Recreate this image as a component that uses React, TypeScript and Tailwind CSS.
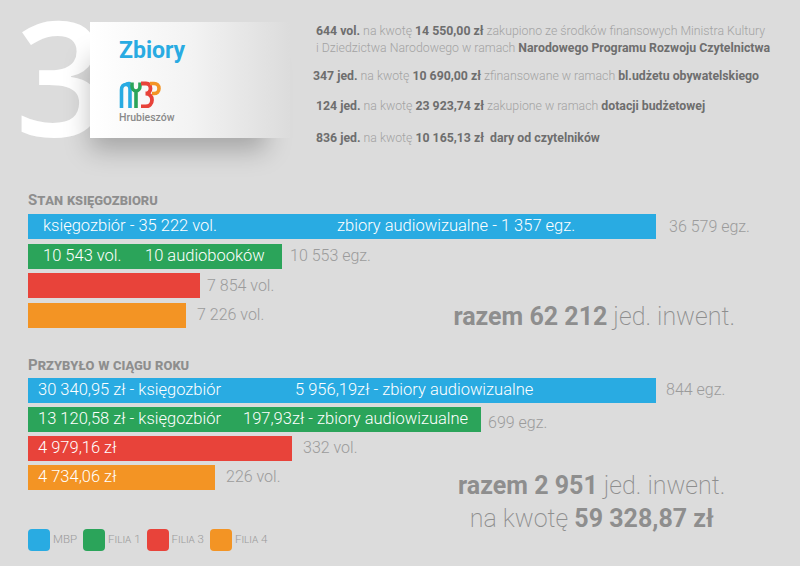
import React from 'react';

// Kolory oddziałów
const BLUE = 'bg-[#29abe2]';
const GREEN = 'bg-[#2ba45a]';
const RED = 'bg-[#e8433a]';
const ORANGE = 'bg-[#f39424]';

const Logo: React.FC = () => (
  <div className="flex flex-col items-start">
    <svg width="42" height="27" viewBox="0 0 42 27" fill="none">
      {/* niebieskie "m" */}
      <path d="M2.5 27V9C2.5 5 4.5 3.5 7 3.5C9.5 3.5 11 5 11 8V27" stroke="#29abe2" strokeWidth="3.6" />
      <path d="M6 4C7.5 2.5 9.5 2 11.5 2.5" stroke="#29abe2" strokeWidth="3" />
      {/* zielony element */}
      <path d="M17 27V10M13 1.5V5C13 8 15 10 17 10C19 10 21 8 21 5V1.5" stroke="#2ba45a" strokeWidth="3.6" />
      {/* czerwone "B" */}
      <path d="M22 2.5H27C30 2.5 31.5 4.5 31.5 7.5C31.5 10.5 29.5 12.5 26.5 12.5C30.5 12.5 33 15 33 19C33 23 30.5 25.5 26.5 25.5H22" stroke="#e8433a" strokeWidth="3.8" />
      {/* pomarańczowe "P" */}
      <path d="M31 2.5H35C38 2.5 40 4.5 40 7.5C40 10.5 38 12.5 35 12.5H33" stroke="#f39424" strokeWidth="3.6" />
    </svg>
    <span className="mt-[5px] text-[10.5px] leading-none text-[#8a8a8a] font-medium">Hrubieszów</span>
  </div>
);

interface BarProps {
  width: number;
  color: string;
  children?: React.ReactNode;
  note?: string;
  noteClass?: string;
}

const Bar: React.FC<BarProps> = ({ width, color, children, note, noteClass }) => (
  <div className="flex items-center h-[25px]">
    <div
      className={`${color} h-[25px] shrink-0 flex items-center text-white text-[16.5px] font-light leading-none whitespace-nowrap`}
      style={{ width }}
    >
      {children}
    </div>
    {note && (
      <span className={`ml-[11px] text-[16px] font-light text-[#9b9b9b] whitespace-nowrap leading-none ${noteClass ?? ''}`}>
        {note}
      </span>
    )}
  </div>
);

const SectionTitle: React.FC<{ children: React.ReactNode }> = ({ children }) => (
  <h2 className="pl-[28px] text-[15px] leading-none font-bold text-[#8e8e8e] [font-variant:small-caps]">
    {children}
  </h2>
);

const LegendItem: React.FC<{ color: string; label: string; caps?: boolean }> = ({ color, label, caps }) => (
  <div className="flex items-center gap-[3px]">
    <div className={`${color} w-[22px] h-[22px] rounded-[4px]`} />
    <span className={`text-[11.5px] text-[#9b9b9b] font-light ${caps ? '[font-variant:small-caps]' : ''}`}>{label}</span>
  </div>
);

export default function App() {
  return (
    <div
      className="w-[800px] h-[566px] bg-[#dcdcdc] overflow-hidden"
      style={{ fontFamily: 'Roboto, "Noto Sans", sans-serif' }}
    >
      {/* Nagłówek */}
      <div className="flex h-[186px]">
        <div className="w-[300px] shrink-0 flex items-start pl-[15px]">
          <div className="w-[75px] shrink-0 overflow-visible">
            <span
              className="block h-[120px] mt-[14px] text-[160px] leading-[120px] font-semibold text-white"
              style={{ fontFamily: '"Open Sans", sans-serif' }}
            >
              3
            </span>
          </div>
          <div className="relative mt-[22px] w-[200px] h-[116px] bg-linear-to-r from-white via-[#f3f3f3] to-[#dcdcdc] shadow-[-12px_24px_24px_-12px_rgba(0,0,0,0.25)] pl-[29px] pt-[17px]">
            <div className="text-[23px] font-bold text-[#29abe2] leading-none">Zbiory</div>
            <div className="mt-[19px]">
              <Logo />
            </div>
          </div>
        </div>
        <div className="pt-[23px] pl-[16px] text-[12.3px] leading-[17px] text-[#a3a3a3] font-light whitespace-nowrap">
          <p>
            <b className="font-bold text-[#6e6e6e]">644 vol.</b> na kwotę <b className="font-bold text-[#6e6e6e]">14 550,00 zł</b> zakupiono ze środków finansowych Ministra Kultury
          </p>
          <p>
            i Dziedzictwa Narodowego w ramach <b className="font-bold text-[#6e6e6e]">Narodowego Programu Rozwoju Czytelnictwa</b>
          </p>
          <p className="mt-[11px] -ml-[3px]">
            <b className="font-bold text-[#6e6e6e]">347 jed.</b> na kwotę <b className="font-bold text-[#6e6e6e]">10 690,00 zł</b> zfinansowane w ramach <b className="font-bold text-[#6e6e6e]">bl.udżetu obywatelskiego</b>
          </p>
          <p className="mt-[13px]">
            <b className="font-bold text-[#6e6e6e]">124 jed.</b> na kwotę <b className="font-bold text-[#6e6e6e]">23 923,74 zł</b> zakupione w ramach <b className="font-bold text-[#6e6e6e]">dotacji budżetowej</b>
          </p>
          <p className="mt-[15px]">
            <b className="font-bold text-[#6e6e6e]">836 jed.</b> na kwotę <b className="font-bold text-[#6e6e6e]">10 165,13 zł</b>&nbsp; <b className="font-bold text-[#6e6e6e]">dary od czytelników</b>
          </p>
        </div>
      </div>

      {/* Stan księgozbioru */}
      <div className="mt-[7px]">
        <SectionTitle>Stan księgozbioru</SectionTitle>
      </div>
      <div className="pl-[28px] mt-[6px] flex flex-col gap-[4.5px]">
        <Bar width={628} color={BLUE} note="36 579 egz." noteClass="!ml-[13px]">
          <span className="pl-[15px] w-[309px]">księgozbiór - 35 222 vol.</span>
          <span>zbiory audiowizualne - 1 357 egz.</span>
        </Bar>
        <Bar width={254} color={GREEN} note="10 553 egz." noteClass="!ml-[8px]">
          <span className="pl-[15px] w-[117px]">10 543 vol.</span>
          <span>10 audiobooków</span>
        </Bar>
        <div className="flex">
          <div className="flex flex-col gap-[4.5px]">
            <Bar width={172} color={RED} note="7 854 vol." noteClass="!ml-[7px]" />
            <Bar width={158} color={ORANGE} note="7 226 vol." />
          </div>
          <div className="flex-1 flex items-end justify-end pr-[65px] -mb-[1px]">
            <p className="text-[25px] leading-none text-[#8e8e8e] font-extralight whitespace-nowrap">
              <b className="font-bold">razem 62 212</b> jed. inwent.
            </p>
          </div>
        </div>
      </div>

      {/* Przybyło w ciągu roku */}
      <div className="mt-[30px]">
        <SectionTitle>Przybyło w ciągu roku</SectionTitle>
      </div>
      <div className="pl-[28px] mt-[5px] flex flex-col gap-[4px]">
        <Bar width={628} color={BLUE} note="844 egz." noteClass="!ml-[10px]">
          <span className="pl-[10px] w-[267px]">30 340,95 zł - księgozbiór</span>
          <span>5 956,19zł - zbiory audiowizualne</span>
        </Bar>
        <Bar width={453} color={GREEN} note="699 egz." noteClass="!ml-[7px] mt-[7px]">
          <span className="pl-[10px] w-[215px]">13 120,58 zł - księgozbiór</span>
          <span>197,93zł - zbiory audiowizualne</span>
        </Bar>
        <div className="flex">
          <div className="flex flex-col gap-[4px]">
            <Bar width={264} color={RED} note="332 vol.">
              <span className="pl-[10px]">4 979,16 zł</span>
            </Bar>
            <Bar width={187} color={ORANGE} note="226 vol.">
              <span className="pl-[10px]">4 734,06 zł</span>
            </Bar>
            <div className="mt-[35px] flex items-center gap-[6px]">
              <LegendItem color={BLUE} label="MBP" />
              <LegendItem color={GREEN} label="Filia 1" caps />
              <LegendItem color={RED} label="Filia 3" caps />
              <LegendItem color={ORANGE} label="Filia 4" caps />
            </div>
          </div>
          <div className="flex-1 pt-[33px] pl-[26px] text-center text-[25px] leading-[33px] text-[#8e8e8e] font-extralight whitespace-nowrap">
            <p>
              <b className="font-bold">razem 2 951</b> jed. inwent.
            </p>
            <p>
              na kwotę <b className="font-bold">59 328,87 zł</b>
            </p>
          </div>
        </div>
      </div>
    </div>
  );
}
